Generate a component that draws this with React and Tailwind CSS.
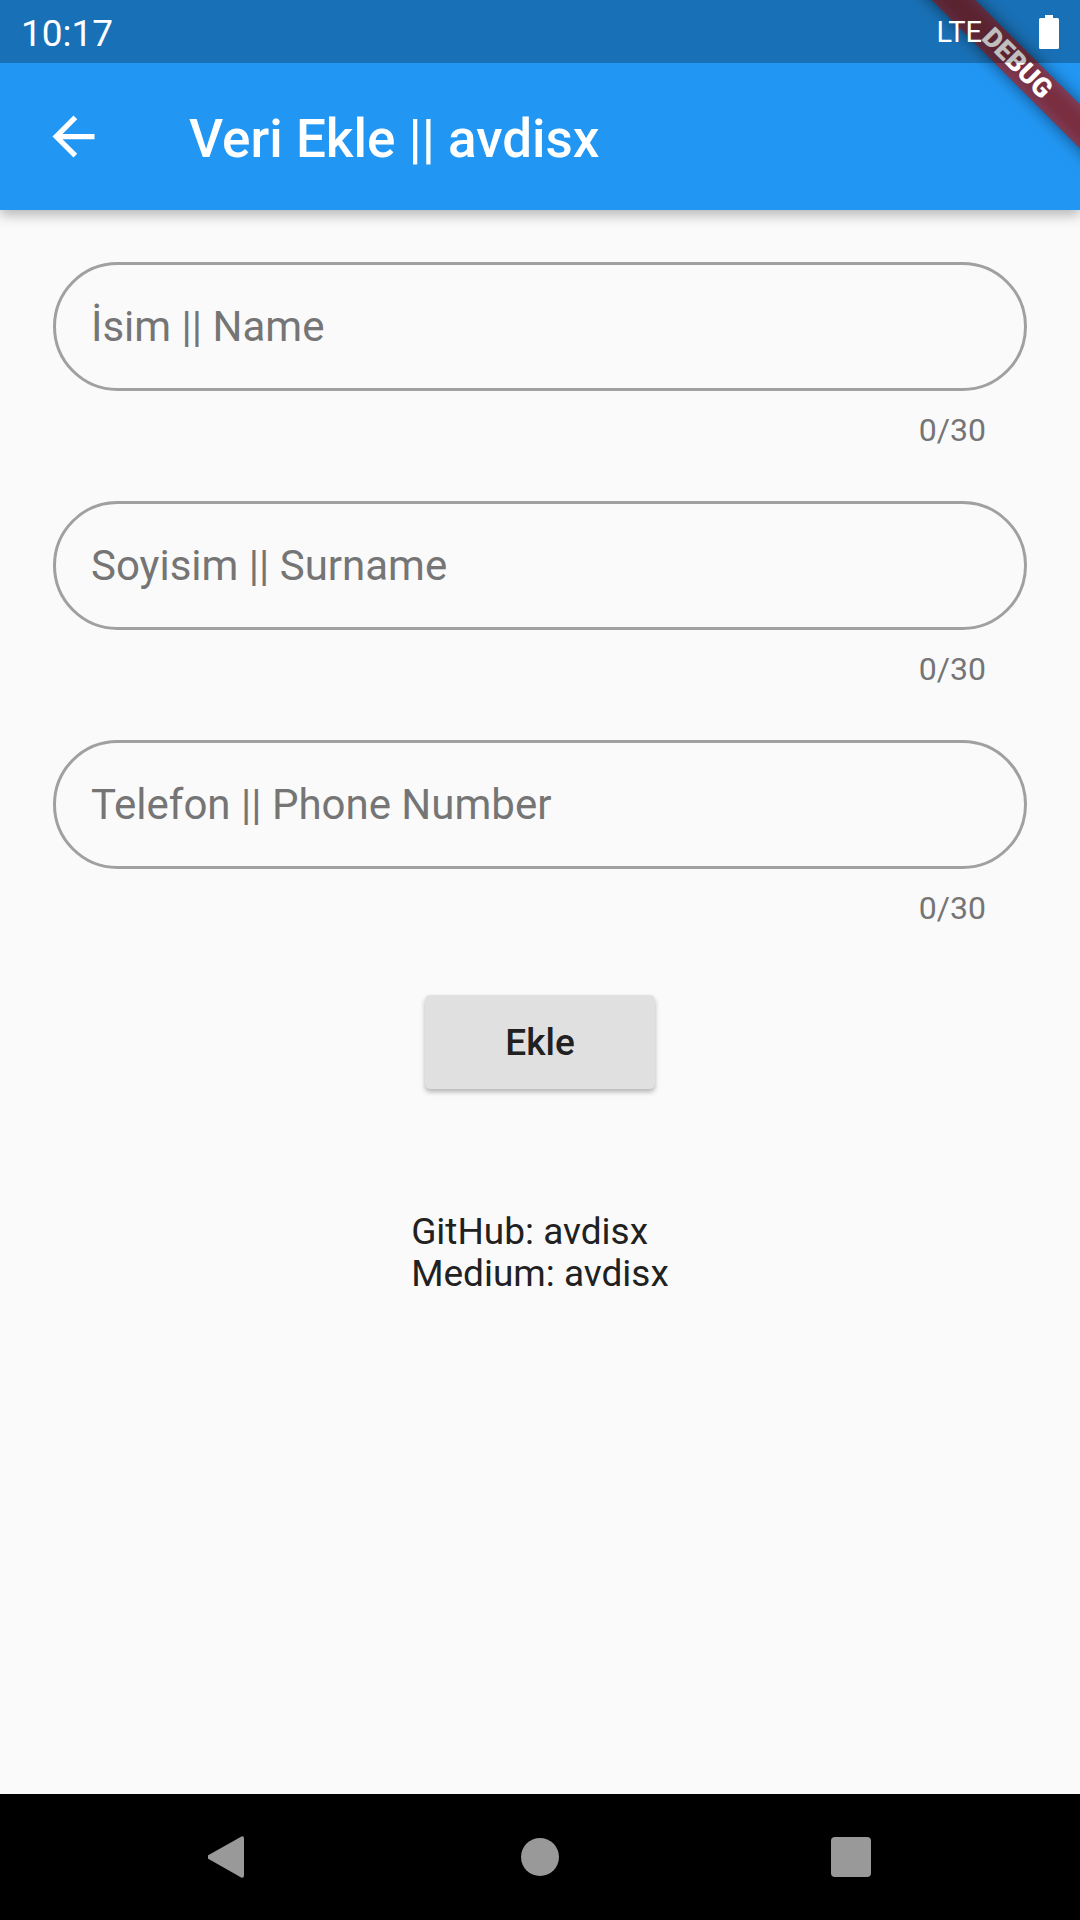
import React, { useState } from "react";

const fields = [
  { id: "name", label: "İsim || Name", type: "text" },
  { id: "surname", label: "Soyisim || Surname", type: "text" },
  { id: "phone", label: "Telefon || Phone Number", type: "tel" },
];

const MAX_LENGTH = 30;

function StatusBar() {
  return (
    <div className="relative z-20 flex h-[63px] items-center justify-between bg-black/25 pl-[21px] pr-[21px] text-white">
      <span className="pt-1 text-[37px] leading-[42px]">10:17</span>
      <div className="flex items-center gap-[57px]">
        <span className="text-[29px] leading-[32px]">LTE</span>
        <svg className="h-[34px] w-5" viewBox="0 0 20 34" fill="currentColor" aria-label="Battery">
          <path d="M6 0h8v3h4.500q1.500 0 1.500 1.500v28q0 1.500-1.500 1.500h-17q-1.500 0-1.500-1.500v-28q0-1.500 1.500-1.500H6z" />
        </svg>
      </div>
    </div>
  );
}

function DebugRibbon() {
  return (
    <div className="pointer-events-none absolute right-0 top-0 z-10 flex size-[126px] items-center justify-center">
      <div className="relative w-[320px] shrink-0 rotate-45">
        <div className="absolute inset-0 bg-black/50 blur-[8px]" />
        <div className="relative bg-[#b71c1c]/63 text-center text-[27px] font-black leading-[31px] text-white">
          DEBUG
        </div>
      </div>
    </div>
  );
}

function Field({ id, label, type }) {
  const [value, setValue] = useState("");
  return (
    <div className="flex flex-col gap-[21px]">
      <input
        id={id}
        type={type}
        aria-label={label}
        placeholder={label}
        maxLength={MAX_LENGTH}
        value={value}
        onChange={(e) => setValue(e.target.value)}
        className="h-[129px] w-full rounded-full border-[3px] border-[#a0a0a0] bg-transparent px-[35px] text-[42px] text-[#212121] outline-none placeholder:text-[#757575] placeholder:opacity-100 focus:border-[#2196f3]"
      />
      <span className="pr-[41px] text-right text-[32px] leading-[36px] text-[#757575]">
        {value.length}/{MAX_LENGTH}
      </span>
    </div>
  );
}

export default function App() {
  return (
    <div className="relative flex min-h-screen flex-col overflow-x-clip bg-[#fafafa] font-[Roboto,sans-serif] text-[#212121]">
      <header className="bg-[#2196f3] shadow-[0_5px_12px_rgba(0,0,0,0.28)]">
        <StatusBar />
        <div className="flex h-[147px] items-center gap-[84px] px-[42px] text-white">
          <button type="button" aria-label="Back" className="size-[63px]">
            <svg className="size-full" viewBox="0 0 24 24" fill="currentColor">
              <path d="M20 11H7.830l5.590-5.590L12 4l-8 8 8 8 1.410-1.410L7.830 13H20v-2z" />
            </svg>
          </button>
          <h1 className="pt-1 text-[53px] font-medium leading-[62px]">Veri Ekle || avdisx</h1>
        </div>
      </header>
      <DebugRibbon />

      <main className="flex grow flex-col px-[53px] pt-[52px]">
        <form className="flex flex-col" onSubmit={(e) => e.preventDefault()}>
          <div className="flex flex-col gap-[53px]">
            {fields.map((f) => (
              <Field key={f.id} {...f} />
            ))}
          </div>
          <button
            type="submit"
            className="mt-[69px] h-[94px] w-[230px] self-center rounded-[5px] bg-[#e0e0e0] pt-0.5 text-[37px] font-medium shadow-[0_3px_5px_rgba(0,0,0,0.28)]"
          >
            Ekle
          </button>
        </form>
        <p className="mt-[122px] self-center text-[37px] leading-[42px]">
          GitHub: avdisx
          <br />
          Medium: avdisx
        </p>
      </main>

      <nav className="grid h-[126px] grid-cols-3 bg-black px-[74px] text-[#999999]">
        <button type="button" aria-label="Back" className="flex items-center justify-center">
          <svg className="size-[42px]" viewBox="0 0 42 42" fill="currentColor">
            <path d="M33.500 .4Q36 -.6 36 2.500v37q0 3.100-2.800 2.100L.2 22.800q-2.400-1.800 0-3.600z" />
          </svg>
        </button>
        <button type="button" aria-label="Home" className="flex items-center justify-center">
          <span className="size-[38px] rounded-full bg-current" />
        </button>
        <button type="button" aria-label="Recent apps" className="flex items-center justify-center">
          <span className="size-10 rounded-[4px] bg-current" />
        </button>
      </nav>
    </div>
  );
}
